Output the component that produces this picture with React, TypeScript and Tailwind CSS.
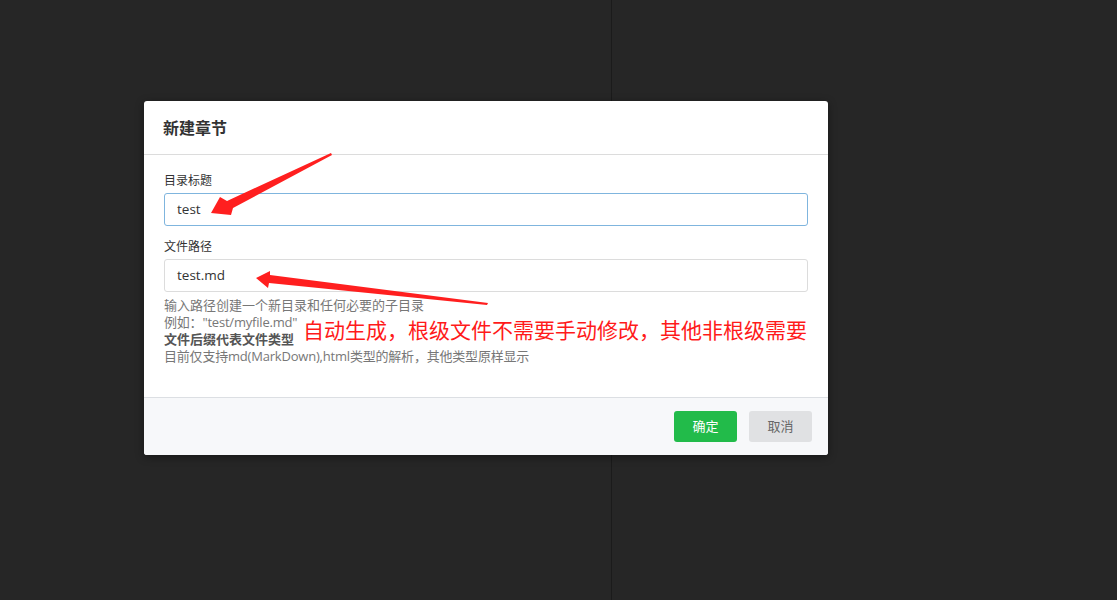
const font = "font-['Open_Sans','Noto_Sans_CJK_SC',sans-serif]"

const App = () => {
    return (
        <div className={`relative h-[600px] w-full overflow-hidden bg-[#262626] ${font}`}>
            {/* background panes */}
            <div className="flex h-full">
                <div className="w-[612px] border-r border-[#1b1b1b]" />
                <div className="flex-1" />
            </div>

            {/* modal overlay */}
            <div className="absolute inset-0 pl-[144px] pt-[101px]">
                <div className="relative w-[684px] rounded-[3px] bg-white shadow-[0_2px_8px_rgba(0,0,0,0.4)]">
                    <div className="flex h-[54px] items-center border-b border-[#dcdcdc] px-[19px]">
                        <h3 className="text-[16px] font-semibold text-[#333]">新建章节</h3>
                    </div>

                    <div className="px-5 pb-[32px] pt-[17px]">
                        <label className="block text-[12px] leading-[18px] text-[#333]">目录标题</label>
                        <div className="mt-[3px] flex h-[33px] items-center rounded-[3px] border border-[#7fb5de] px-[12px] text-[13.5px] text-[#333]">
                            test
                        </div>

                        <label className="mt-[12px] block text-[12px] leading-[18px] text-[#333]">文件路径</label>
                        <div className="mt-[3px] flex h-[33px] items-center rounded-[3px] border border-[#dcdcdc] px-[12px] text-[13.5px] text-[#333]">
                            test.md
                        </div>

                        <div className="mt-[5px] text-[13px] leading-[17px] text-[#777]">
                            <p>输入路径创建一个新目录和任何必要的子目录</p>
                            <p className="tracking-[-0.2px]">例如："test/myfile.md"</p>
                            <p className="font-bold text-[#555]">文件后缀代表文件类型</p>
                            <p className="tracking-[-0.2px]">目前仅支持md(MarkDown),html类型的解析，其他类型原样显示</p>
                        </div>
                    </div>

                    <div className="flex h-[58px] items-start justify-end gap-3 rounded-b-[3px] border-t border-[#dcdfe3] bg-[#f7f8fa] pr-4 pt-[13px]">
                        <button className="h-[31px] w-[63px] rounded-[3px] bg-[#22bb4a] text-[13px] text-white">确定</button>
                        <button className="h-[31px] w-[63px] rounded-[3px] bg-[#e0e1e3] text-[13px] text-[#666]">取消</button>
                    </div>

                    {/* annotation text */}
                    <div className="absolute left-[159px] top-[216px] whitespace-nowrap text-[21px] leading-[26px] text-[#ff1a1a]">
                        自动生成，根级文件不需要手动修改，其他非根级需要
                    </div>
                </div>
            </div>

            {/* annotation arrows */}
            <svg className="pointer-events-none absolute inset-0" width="1117" height="600">
                <polygon
                    fill="#ff1f1f"
                    points="331,153 332,155 233,208 231,215 211,213 220,197 227,201"
                />
                <polygon
                    fill="#ff1f1f"
                    points="488,303 487,305 269,283 268,288 256,278 270,271 270,275"
                />
            </svg>
        </div>
    )
}

export default App
